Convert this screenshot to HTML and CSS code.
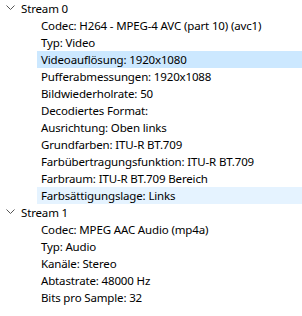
FILE: index.html
```html
<!DOCTYPE html>
<html lang="de">
<head>
    <meta charset="UTF-8">
    <title>Streams</title>
    <link rel="stylesheet" href="styles.css">
</head>
<body>
    <ul class="tree">
        <li class="stream">
            <div class="row stream-row">
                <svg class="chevron" width="9" height="6" viewBox="0 0 9 6"><path d="M0.5 0.5 L4.5 4.5 L8.5 0.5" fill="none" stroke="#555" stroke-width="1"/></svg>
                <span>Stream 0</span>
            </div>
            <ul class="props">
                <li class="row">Codec: H264 - MPEG-4 AVC (part 10) (avc1)</li>
                <li class="row">Typ: Video</li>
                <li class="row selected">Videoauflösung: 1920x1080</li>
                <li class="row">Pufferabmessungen: 1920x1088</li>
                <li class="row">Bildwiederholrate: 50</li>
                <li class="row">Decodiertes Format:</li>
                <li class="row">Ausrichtung: Oben links</li>
                <li class="row">Grundfarben: ITU-R BT.709</li>
                <li class="row">Farbübertragungsfunktion: ITU-R BT.709</li>
                <li class="row">Farbraum: ITU-R BT.709 Bereich</li>
                <li class="row hover">Farbsättigungslage: Links</li>
            </ul>
        </li>
        <li class="stream">
            <div class="row stream-row">
                <svg class="chevron" width="9" height="6" viewBox="0 0 9 6"><path d="M0.5 0.5 L4.5 4.5 L8.5 0.5" fill="none" stroke="#555" stroke-width="1"/></svg>
                <span>Stream 1</span>
            </div>
            <ul class="props">
                <li class="row">Codec: MPEG AAC Audio (mp4a)</li>
                <li class="row">Typ: Audio</li>
                <li class="row">Kanäle: Stereo</li>
                <li class="row">Abtastrate: 48000 Hz</li>
                <li class="row">Bits pro Sample: 32</li>
            </ul>
        </li>
    </ul>
</body>
</html>
```

FILE: styles.css
```css
body {
    margin: 0;
    padding: 0;
    background-color: #fff;
    color: #000;
    font-family: "Noto Sans", sans-serif;
    font-size: 11.5px;
    letter-spacing: -0.15px;
}

.tree,
.props {
    list-style: none;
    margin: 0;
    padding: 0;
}

.row {
    height: 17px;
    line-height: 17px;
    white-space: nowrap;
}

.stream-row {
    display: flex;
    align-items: center;
    padding-left: 6px;
}

.chevron {
    margin-right: 6px;
    margin-top: -1px;
}

.props .row {
    margin-left: 37px;
    padding-left: 4px;
}

.props .row.selected {
    background-color: #cce8ff;
}

.props .row.hover {
    background-color: #e5f3ff;
}
```
